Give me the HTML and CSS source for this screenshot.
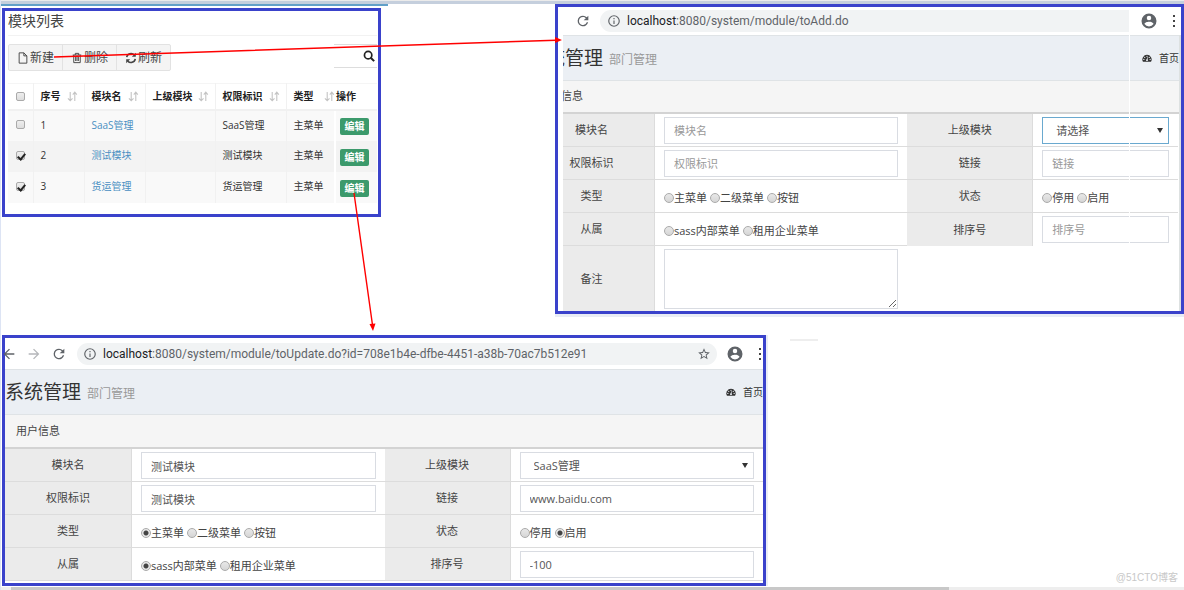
FILE: index.html
```html
<!DOCTYPE html>
<html lang="zh-CN">
<head>
<meta charset="utf-8">
<title>模块管理</title>
<link rel="stylesheet" href="styles.css">
</head>
<body>
<svg class="defs" aria-hidden="true">
  <symbol id="i-file" viewBox="0 0 12 14"><path d="M1.5 1h5.5l3.5 3.5V13h-9zM7 1v3.5h3.5" fill="none" stroke="currentColor" stroke-width="1.1"/></symbol>
  <symbol id="i-trash" viewBox="0 0 12 14"><path d="M1 3.5h10M4 3.5V1.6h4v1.9M2.2 3.5V12.4h7.6V3.5M4.4 5.5v5M6 5.5v5M7.6 5.5v5" fill="none" stroke="currentColor" stroke-width="1.1"/></symbol>
  <symbol id="i-sync" viewBox="0 0 14 14"><path d="M2 6a5 5 0 0 1 8.8-2.4M12 8a5 5 0 0 1-8.8 2.4" fill="none" stroke="currentColor" stroke-width="1.8"/><path d="M12.6 1v4.6H8zM1.4 13V8.400H6z" fill="currentColor"/></symbol>
  <symbol id="i-search" viewBox="0 0 14 14"><circle cx="6" cy="6" r="4.300" fill="none" stroke="currentColor" stroke-width="2"/><path d="M9 9l4 4" stroke="currentColor" stroke-width="2.400"/></symbol>
  <symbol id="i-sort" viewBox="0 0 12 12"><path d="M3.500 1v9.500M1 8l2.500 2.700L6 8M8.500 11V1.500M6.300 4l2.200-2.700L10.700 4" fill="none" stroke="currentColor" stroke-width="1.200"/></symbol>
  <symbol id="i-reload" viewBox="0 0 24 24"><path d="M17.650 6.350A7.960 7.960 0 0 0 12 4a8 8 0 1 0 7.730 10h-2.080A6 6 0 1 1 12 6c1.660 0 3.140.69 4.220 1.780L13 11h7V4z" fill="currentColor"/></symbol>
  <symbol id="i-info" viewBox="0 0 24 24"><path d="M11 7h2v2h-2zm0 4h2v6h-2zm1-9a10 10 0 1 0 0 20 10 10 0 0 0 0-20zm0 18a8 8 0 1 1 0-16 8 8 0 0 1 0 16z" fill="currentColor"/></symbol>
  <symbol id="i-user" viewBox="0 0 24 24"><path d="M12 2a10 10 0 1 0 0 20 10 10 0 0 0 0-20zm0 3a3 3 0 1 1 0 6 3 3 0 0 1 0-6zm0 14.200a7.200 7.200 0 0 1-6-3.220c.03-1.990 4-3.080 6-3.080s5.970 1.090 6 3.080a7.200 7.200 0 0 1-6 3.220z" fill="currentColor"/></symbol>
  <symbol id="i-dots" viewBox="0 0 4 14"><path d="M1 1h2v2H1zM1 6h2v2H1zM1 11h2v2H1z" fill="currentColor"/></symbol>
  <symbol id="i-star" viewBox="0 0 24 24"><path d="M22 9.240l-7.190-.62L12 2 9.190 8.630 2 9.240l5.460 4.730L5.820 21 12 17.270 18.180 21l-1.630-7.030zM12 15.400l-3.760 2.270 1-4.280-3.320-2.880 4.380-.38L12 6.100l1.710 4.040 4.380.38-3.320 2.880 1 4.280z" fill="currentColor"/></symbol>
  <symbol id="i-back" viewBox="0 0 24 24"><path d="M20 11H7.830l5.590-5.590L12 4l-8 8 8 8 1.410-1.410L7.830 13H20z" fill="currentColor"/></symbol>
  <symbol id="i-forward" viewBox="0 0 24 24"><path d="M12 4l-1.410 1.410L16.170 11H4v2h12.170l-5.580 5.590L12 20l8-8z" fill="currentColor"/></symbol>
  <symbol id="i-gauge" viewBox="0 0 14 12"><path d="M7 1.500a6.500 6.500 0 0 0-5.600 9.800h11.200A6.500 6.500 0 0 0 7 1.500z" fill="currentColor"/><g fill="#ebeff4"><circle cx="7" cy="3.600" r=".9"/><circle cx="3.800" cy="5" r=".9"/><circle cx="2.600" cy="8" r=".9"/><circle cx="10.200" cy="5" r=".9"/><circle cx="11.400" cy="8" r=".9"/></g><path d="M7 9l1-4" stroke="#ebeff4"/><circle cx="7" cy="9" r="1.300" fill="#ebeff4"/></symbol>
</svg>

<main class="canvas">
  <div class="strip"></div>
  <div class="row">
    <section class="panel list">
      <h1 class="list-title">模块列表</h1>
      <div class="tools">
        <div class="btns">
          <button type="button"><svg><use href="#i-file"/></svg>新建</button>
          <button type="button"><svg><use href="#i-trash"/></svg>删除</button>
          <button type="button"><svg><use href="#i-sync"/></svg>刷新</button>
        </div>
        <button type="button" class="search" aria-label="搜索"><svg><use href="#i-search"/></svg></button>
      </div>
      <table class="grid">
        <colgroup><col class="c-check"><col class="c-no"><col class="c-name"><col class="c-parent"><col class="c-key"><col class="c-type"><col class="c-op"></colgroup>
        <thead>
          <tr><th><input type="checkbox" aria-label="全选"></th>
            <th><span>序号<svg><use href="#i-sort"/></svg></span></th>
            <th><span>模块名<svg><use href="#i-sort"/></svg></span></th>
            <th><span>上级模块<svg><use href="#i-sort"/></svg></span></th>
            <th><span>权限标识<svg><use href="#i-sort"/></svg></span></th>
            <th><span>类型<svg><use href="#i-sort"/></svg></span></th>
            <th>操作</th></tr>
        </thead>
        <tbody>
          <tr><td><input type="checkbox" aria-label="1"></td><td>1</td><td><a href="#">SaaS管理</a></td><td></td><td>SaaS管理</td><td>主菜单</td><td><button type="button" class="edit">编辑</button></td></tr>
          <tr><td><input type="checkbox" aria-label="2" checked></td><td>2</td><td><a href="#">测试模块</a></td><td></td><td>测试模块</td><td>主菜单</td><td><button type="button" class="edit">编辑</button></td></tr>
          <tr><td><input type="checkbox" aria-label="3" checked></td><td>3</td><td><a href="#">货运管理</a></td><td></td><td>货运管理</td><td>主菜单</td><td><button type="button" class="edit">编辑</button></td></tr>
        </tbody>
      </table>
    </section>

    <section class="panel add">
      <div class="bar">
        <svg class="ic"><use href="#i-reload"/></svg>
        <div class="omni"><svg class="ic"><use href="#i-info"/></svg><span class="url"><b>localhost</b>:8080/system/module/toAdd.do</span></div>
        <svg class="ic user"><use href="#i-user"/></svg>
        <svg class="dots"><use href="#i-dots"/></svg>
      </div>
      <div class="clip">
        <div class="page">
          <header class="head"><h2>统管理</h2><small>部门管理</small><a href="#" class="home"><svg><use href="#i-gauge"/></svg>首页</a></header>
          <div class="section">信息</div>
          <form class="form">
            <label class="lab" for="a1">模块名</label><div class="fld"><input id="a1" type="text" placeholder="模块名"></div>
            <label class="lab" for="a2">上级模块</label><div class="fld sel focus"><select id="a2"><option>请选择</option></select></div>
            <label class="lab" for="a3">权限标识</label><div class="fld"><input id="a3" type="text" placeholder="权限标识"></div>
            <label class="lab" for="a4">链接</label><div class="fld"><input id="a4" type="text" placeholder="链接"></div>
            <span class="lab">类型</span><div class="fld radios"><label><input type="radio" name="at">主菜单</label><label><input type="radio" name="at">二级菜单</label><label><input type="radio" name="at">按钮</label></div>
            <span class="lab">状态</span><div class="fld radios"><label><input type="radio" name="as">停用</label><label><input type="radio" name="as">启用</label></div>
            <span class="lab">从属</span><div class="fld radios"><label><input type="radio" name="ab">sass内部菜单</label><label><input type="radio" name="ab">租用企业菜单</label></div>
            <label class="lab end" for="a5">排序号</label><div class="fld end"><input id="a5" type="text" placeholder="排序号"></div>
            <label class="lab end" for="a6">备注</label><div class="fld end"><textarea id="a6"></textarea></div>
          </form>
        </div>
      </div>
      <div class="seam"></div>
    </section>
  </div>

  <section class="panel update">
    <div class="bar">
      <svg class="ic"><use href="#i-back"/></svg>
      <svg class="ic dim"><use href="#i-forward"/></svg>
      <svg class="ic"><use href="#i-reload"/></svg>
      <div class="omni"><svg class="ic"><use href="#i-info"/></svg><span class="url"><b>localhost</b>:8080/system/module/toUpdate.do?id=708e1b4e-dfbe-4451-a38b-70ac7b512e91</span><svg class="ic"><use href="#i-star"/></svg></div>
      <svg class="ic user"><use href="#i-user"/></svg>
      <svg class="dots"><use href="#i-dots"/></svg>
    </div>
    <div class="clip">
      <div class="page">
        <header class="head"><h2>系统管理</h2><small>部门管理</small><a href="#" class="home"><svg><use href="#i-gauge"/></svg>首页</a></header>
        <div class="section">用户信息</div>
        <form class="form">
          <label class="lab" for="u1">模块名</label><div class="fld"><input id="u1" type="text" value="测试模块"></div>
          <label class="lab" for="u2">上级模块</label><div class="fld sel"><select id="u2"><option>SaaS管理</option></select></div>
          <label class="lab" for="u3">权限标识</label><div class="fld"><input id="u3" type="text" value="测试模块"></div>
          <label class="lab" for="u4">链接</label><div class="fld"><input id="u4" type="text" value="www.baidu.com"></div>
          <span class="lab">类型</span><div class="fld radios"><label><input type="radio" name="ut" checked>主菜单</label><label><input type="radio" name="ut">二级菜单</label><label><input type="radio" name="ut">按钮</label></div>
          <span class="lab">状态</span><div class="fld radios"><label><input type="radio" name="us">停用</label><label><input type="radio" name="us" checked>启用</label></div>
          <span class="lab">从属</span><div class="fld radios"><label><input type="radio" name="ub" checked>sass内部菜单</label><label><input type="radio" name="ub">租用企业菜单</label></div>
          <label class="lab" for="u5">排序号</label><div class="fld"><input id="u5" type="text" value="-100"></div>
        </form>
      </div>
    </div>
  </section>

  <svg class="arrows" aria-hidden="true">
    <g stroke="#f00" stroke-width="1.400" fill="#f00">
      <path d="M54 57L556 40.200M354 193L372.500 325"/>
      <path d="M562 40l-7-3v6zM373 331l-3.500-7 6-.6z" stroke="none"/>
    </g>
  </svg>
  <i class="speck"></i>
  <p class="mark">@51CTO博客</p>
  <div class="scroll"><i></i></div>
</main>
</body>
</html>
```
FILE: styles.css
```css
* { box-sizing: border-box; }
body { margin: 0; background: #fff; color: #444; font: 11px/16px "Open Sans", "Noto Sans CJK SC", sans-serif; }
h1, h2, p { margin: 0; font-weight: 400; }
a { color: #4a8fc2; text-decoration: none; }
button, input, select, textarea { font: inherit; color: inherit; margin: 0; }
.defs { display: none; }

.canvas { position: relative; display: flex; flex-direction: column; min-height: 100vh; border-left: 1px solid #dde4f4; overflow: hidden; }
.strip { height: 4px; background: #c5cfdd; border-top: 1px solid #ebebeb; }
.row { display: flex; justify-content: space-between; align-items: flex-start; }
.row::before { content: ""; position: absolute; top: 4px; left: 0; width: 387px; height: 2px; background: #62a0c8; }

.panel { position: relative; border: 3px solid #3a42cb; background: #fff; }
.list { width: 379px; margin: 4px 0 0 1px; padding: 0 1px 11px 3px; }
.add { width: 629px; box-shadow: 0 3px 0 #e9edf5; }
.update { width: 764px; margin: 21px 0 0 1px; padding-bottom: 2px; box-shadow: 2px 0 0 #e9edf5; }

.list-title { font-size: 14px; line-height: 20px; padding-bottom: 4px; border-bottom: 1px solid #f2f2f2; }
.tools { display: flex; justify-content: space-between; margin-top: 8px; }
.btns { display: flex; border: 1px solid #e2e2e2; border-radius: 2px; background: #f4f4f4; }
.btns button { display: flex; align-items: center; gap: 1px; height: 25px; padding: 0 8px; border: 0; border-right: 1px solid #e2e2e2; background: none; font-size: 12px; }
.btns button:last-child { border-right: 0; }
.btns svg { width: 12px; height: 12px; }
.search { display: flex; align-items: center; justify-content: flex-end; width: 43px; height: 24px; padding: 0 2px 0 0; border: solid #ddd; border-width: 1px 0; background: #fff; color: #222; }
.search svg { width: 12px; height: 12px; }

.grid { width: 100%; margin-top: 12px; border-collapse: collapse; table-layout: fixed; font-size: 10px; line-height: 14px; color: #333; }
.c-check { width: 25px; } .c-no { width: 51px; } .c-name { width: 61px; } .c-parent { width: 70px; }
.c-key { width: 71px; } .c-type { width: 49px; }
.grid th, .grid td { padding: 0 0 0 7px; text-align: left; border-right: 1px solid #f1f1f1; white-space: nowrap; }
.grid th { height: 26px; border-bottom: 2px solid #f1f1f1; border-top: 1px solid #f5f5f5; color: #222; }
.grid th span { display: flex; justify-content: space-between; align-items: center; padding-right: 6px; }
.grid th:nth-child(6) span { padding-right: 0; }
.grid th svg { width: 11px; height: 11px; color: #c4c4c4; }
.grid td { height: 31px; padding-bottom: 2px; background: #f9f9f9; }
.grid tr:nth-child(2) td { background: #f3f3f3; }
.grid th:first-child, .grid td:first-child { padding-left: 8px; }
.grid th:last-child { padding-left: 1px; border-right: 0; }
.grid td:last-child { padding: 2px 0 0 4px; border-right: 0; }
.grid td:nth-child(6) { border-right: 2px solid #fff; }
.grid th:nth-child(6) { border-right: 0; }
.edit { display: block; width: 29px; height: 17px; padding: 0; border: 0; border-radius: 2px; background: #3c9a6c; color: #fff; font-size: 10px; line-height: 17px; font-weight: 700; }
input[type=checkbox] { appearance: none; display: block; width: 9px; height: 9px; border: 1px solid #aaa; border-radius: 2px; background: linear-gradient(#eee, #ddd); }
input[type=checkbox]:checked::after { content: ""; display: block; width: 3px; height: 6px; margin: 0 0 0 2px; border: solid #222; border-width: 0 2px 2px 0; transform: rotate(40deg); }

.bar { display: flex; align-items: center; height: 28px; color: #5f6368; }
.ic { width: 16px; height: 16px; flex: none; }
.dim { color: #b5b7ba; }
.omni { display: flex; align-items: center; gap: 6px; flex: 1; height: 22px; padding: 0 6px; border-radius: 11px; background: #f1f3f4; }
.omni .ic { width: 14px; height: 14px; }
.url { flex: 1; font-family: Roboto, sans-serif; font-size: 12px; white-space: nowrap; color: #5f6368; }
.url b { font-weight: 400; color: #202124; }
.user { width: 18px; height: 18px; }
.dots { width: 4px; height: 14px; color: #444; }
.add .bar { padding: 0 5px 0 17px; }
.add .omni { margin: 0 11px 0 9px; padding-left: 7px; border-radius: 11px 0 0 11px; }
.add .dots, .update .dots { margin-left: 14px; }
.update .bar { height: 31px; margin-left: -4px; padding-right: 1px; }
.update .bar > .ic + .ic:not(.user) { margin-left: 9px; }
.update .omni { margin: 0 9px 0 10px; }

.clip { overflow: hidden; }
.add .clip { margin-left: 5px; }
.add .page { margin-left: -34px; border-right: 2px solid #dde1e1; }
.head { display: flex; align-items: center; gap: 6px; height: 46px; border: solid #dfe3e6; border-width: 1px 0; background: #ebeff4; color: #333; }
.head h2 { font-size: 19px; line-height: 28px; }
.add .head h2 { padding-left: 17px; }
.head small { padding-top: 4px; font-size: 12px; color: #999; }
.home { display: flex; align-items: center; gap: 7px; margin-left: auto; font-size: 10px; color: #333; }
.home svg { width: 10px; height: 10px; }
.section { height: 33px; padding: 0 11px; border-bottom: 2px solid #d3d3d3; background: #f5f5f5; line-height: 30px; }
.add .section { padding-left: 32px; }
.update .section { height: 34px; line-height: 32px; }

.form { display: grid; grid-template-columns: 127px 253fr 126px 253fr; grid-auto-rows: minmax(33px, auto); }
.add .form { grid-template-columns: 126px 253fr 126px 145fr; margin-right: 1px; }
.lab, .fld { border-bottom: 1px solid #dcdcdc; }
.lab { display: flex; align-items: center; justify-content: center; border-right: 1px solid #dcdcdc; background: #ebebeb; }
.fld { position: relative; padding: 3px 9px 2px; min-width: 0; }
.end { border-bottom: 0; }
.fld input[type=text], .fld select, .fld textarea { display: block; width: 100%; height: 27px; padding: 0 9px; border: 1px solid #d9dce2; border-radius: 0; background: #fff; color: #555; outline: 0; }
.fld select { appearance: none; padding-left: 13px; }
.fld textarea { height: 60px; resize: vertical; }
.fld ::placeholder { color: #999; }
.sel::after { content: ""; position: absolute; right: 15px; top: 14px; border: 3px solid transparent; border-top: 5px solid #333; border-bottom: 0; }
.focus select { border-color: #6aa9cf; }
.radios { display: flex; align-items: center; gap: 3px; padding-top: 5px; }
.radios label { display: flex; align-items: center; white-space: nowrap; }
input[type=radio] { appearance: none; width: 10px; height: 10px; border: 1px solid #aaa; border-radius: 50%; background: linear-gradient(#e8e8e8, #d6d6d6); }
input[type=radio]:checked { background: radial-gradient(#444 0 2px, #e8e8e8 3px); }

.seam { position: absolute; top: 0; bottom: 0; right: 51px; width: 1px; background: #fff; }
.arrows { position: absolute; inset: 0 auto auto -1px; width: 600px; height: 340px; pointer-events: none; }
.speck { position: absolute; left: 789px; top: 339px; width: 28px; height: 2px; background: #eee; }
.mark { position: absolute; right: 6px; bottom: 4px; font: 10px/16px "Liberation Sans", "Noto Sans CJK SC", sans-serif; color: #c8c8c8; }
.scroll { margin-top: auto; height: 3px; padding-left: 10px; background: #eee; }
.scroll i { display: block; width: 80%; height: 3px; background: #c8c8c8; }
```
